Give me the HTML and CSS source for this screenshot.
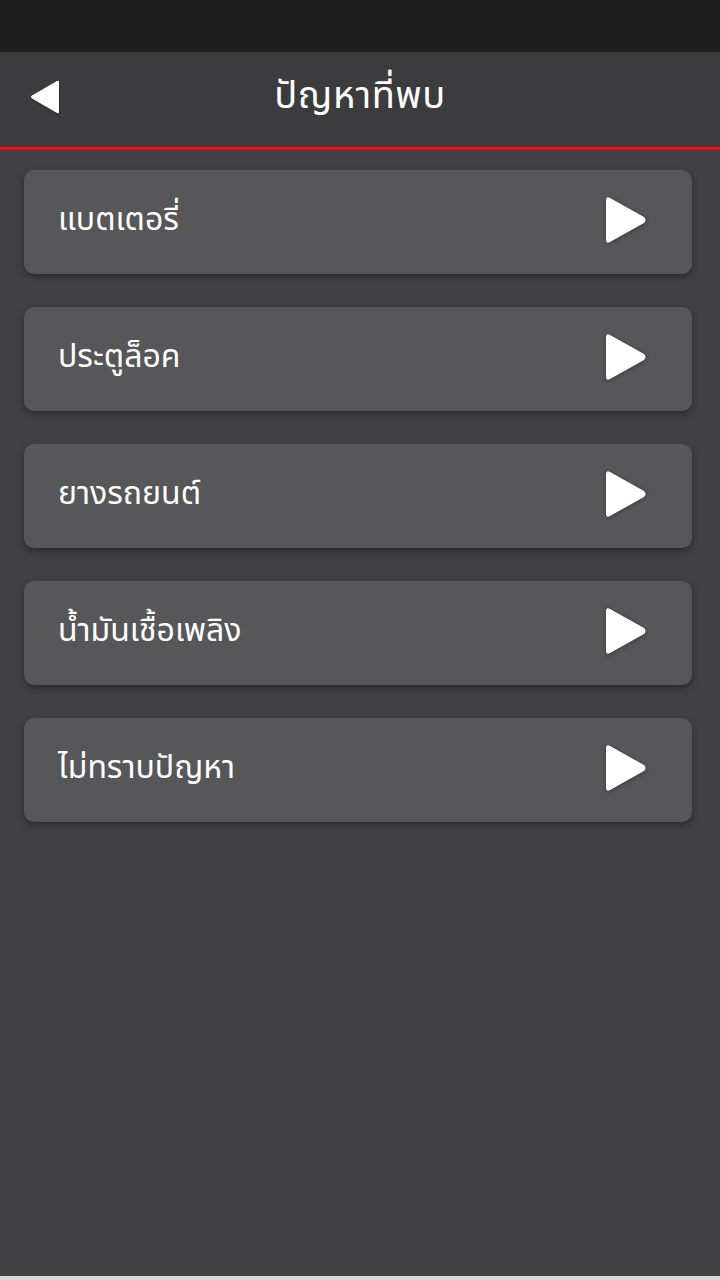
FILE: index.html
```html
<!DOCTYPE html>
<html lang="th">
<head>
<meta charset="utf-8">
<link rel="stylesheet" href="styles.css">
</head>
<body>
<div class="screen">
  <div class="statusbar"></div>
  <header class="header">
    <svg class="back" viewBox="0 0 32 36" width="32" height="36"><path d="M30 3 L30 33 Q30 35 28 34 L3 19.5 Q1 18 3 16.5 L28 2 Q30 1 30 3 Z" fill="#fff"/></svg>
    <h1 class="title">ปัญหาที่พบ</h1>
  </header>
  <div class="redline"></div>
  <main class="list">
    <div class="card"><span class="label">แบตเตอรี่</span><svg class="play" viewBox="0 0 44 48" width="44" height="48"><path d="M2 4 Q2 0 6 2 L40 21 Q43 24 40 27 L6 46 Q2 48 2 44 Z" fill="#fff"/></svg></div>
    <div class="card"><span class="label">ประตูล็อค</span><svg class="play" viewBox="0 0 44 48" width="44" height="48"><path d="M2 4 Q2 0 6 2 L40 21 Q43 24 40 27 L6 46 Q2 48 2 44 Z" fill="#fff"/></svg></div>
    <div class="card"><span class="label">ยางรถยนต์</span><svg class="play" viewBox="0 0 44 48" width="44" height="48"><path d="M2 4 Q2 0 6 2 L40 21 Q43 24 40 27 L6 46 Q2 48 2 44 Z" fill="#fff"/></svg></div>
    <div class="card"><span class="label">น้ำมันเชื้อเพลิง</span><svg class="play" viewBox="0 0 44 48" width="44" height="48"><path d="M2 4 Q2 0 6 2 L40 21 Q43 24 40 27 L6 46 Q2 48 2 44 Z" fill="#fff"/></svg></div>
    <div class="card"><span class="label">ไม่ทราบปัญหา</span><svg class="play" viewBox="0 0 44 48" width="44" height="48"><path d="M2 4 Q2 0 6 2 L40 21 Q43 24 40 27 L6 46 Q2 48 2 44 Z" fill="#fff"/></svg></div>
  </main>
  <div class="bottom"></div>
</div>
</body>
</html>
```
FILE: styles.css
```css
* { box-sizing: border-box; }
html, body { margin: 0; padding: 0; }
body {
  width: 720px;
  height: 1280px;
  overflow: hidden;
  background: #414143;
  font-family: "Noto Sans Thai", "Noto Sans Thai UI", "Noto Sans", "DejaVu Sans", sans-serif;
  color: #fff;
}
.screen {
  width: 720px;
  height: 1280px;
  display: flex;
  flex-direction: column;
}
.statusbar {
  height: 52px;
  background: #1f1f1f;
  flex: none;
}
.header {
  height: 94px;
  background: #3c3c3e;
  display: flex;
  align-items: center;
  justify-content: center;
  position: relative;
  flex: none;
}
.back {
  position: absolute;
  left: 29px;
  top: 27px;
  filter: drop-shadow(0 1px 1px rgba(0,0,0,0.3));
}
.title {
  margin: 0;
  font-size: 38px;
  font-weight: 400;
  letter-spacing: 0.5px;
  line-height: 1;
  padding-bottom: 4px;
}
.redline {
  height: 5px;
  flex: none;
  background: linear-gradient(to bottom, #8e1216 0%, #e0222a 40%, #c21b21 70%, #5a2a2c 100%);
}
.list {
  flex: 1;
  padding: 19px 28px 0 24px;
  display: flex;
  flex-direction: column;
  gap: 33px;
}
.card {
  height: 104px;
  background: #575759;
  border-radius: 10px;
  box-shadow: 0 3px 6px rgba(0,0,0,0.35);
  display: flex;
  align-items: center;
  justify-content: space-between;
  padding: 0 44px 0 34px;
}
.label {
  font-size: 32px;
  line-height: 1;
  padding-bottom: 4px;
}
.play {
  filter: drop-shadow(0 1px 2px rgba(0,0,0,0.35));
  margin-top: -5px;
}
.bottom {
  height: 4px;
  flex: none;
  background: #d6d6d6;
}
```
